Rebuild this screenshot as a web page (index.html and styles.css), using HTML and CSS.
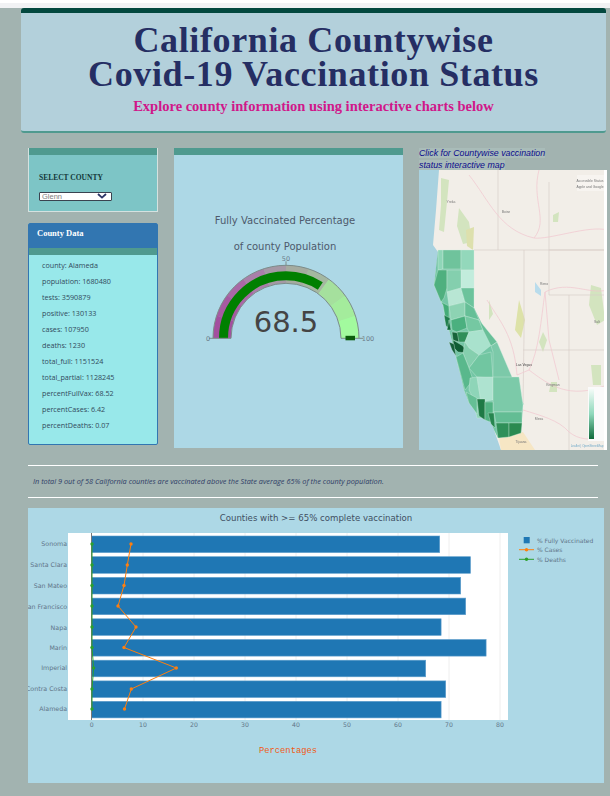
FILE: index.html
```html
<!DOCTYPE html>
<html lang="en">
<head>
<meta charset="utf-8">
<title>California Countywise Covid-19 Vaccination Status</title>
<link rel="stylesheet" href="styles.css">
</head>
<body>
<div class="topbar"></div>
<main class="page">
  <header class="hero">
    <h1>California Countywise<br>Covid-19 Vaccination Status</h1>
    <p class="lead">Explore county information using interactive charts below</p>
  </header>

  <section class="dash">
    <div class="side">
      <div class="card-select">
        <div class="band"></div>
        <div class="select-body">
          <h6>SELECT COUNTY</h6>
          <div class="select-wrap">
            <select><option>Glenn</option></select>
            <svg class="chev" viewBox="0 0 10 6"><path d="M1 1 L5 4.6 L9 1" fill="none" stroke="#2b3566" stroke-width="1.8"/></svg>
          </div>
        </div>
      </div>
      <div class="card-data">
        <div class="data-head">County Data</div>
        <div class="band"></div>
        <ul class="data-list">
          <li>county: Alameda</li>
          <li>population: 1680480</li>
          <li>tests: 3590879</li>
          <li>positive: 130133</li>
          <li>cases: 107950</li>
          <li>deaths: 1230</li>
          <li>total_full: 1151524</li>
          <li>total_partial: 1128245</li>
          <li>percentFullVax: 68.52</li>
          <li>percentCases: 6.42</li>
          <li>percentDeaths: 0.07</li>
        </ul>
      </div>
    </div>

    <div class="gauge-card">
      <div class="band"></div>
      <svg class="gauge" viewBox="174 155 229 293">
        <text class="g-title" x="285" y="224">Fully Vaccinated Percentage</text>
        <text class="g-title" x="285" y="250">of county Population</text>
        <g transform="translate(286 338.3)" fill="none">
          <g stroke-width="18">
            <path stroke="#a34f9f" pathLength="100" stroke-dasharray="10.2 200" stroke-dashoffset="0" d="M-64 0A64 64 0 0 1 64 0"/>
            <path stroke="#a65aa2" pathLength="100" stroke-dasharray="10.2 200" stroke-dashoffset="-10" d="M-64 0A64 64 0 0 1 64 0"/>
            <path stroke="#a968a6" pathLength="100" stroke-dasharray="10.2 200" stroke-dashoffset="-20" d="M-64 0A64 64 0 0 1 64 0"/>
            <path stroke="#a97fa9" pathLength="100" stroke-dasharray="10.2 200" stroke-dashoffset="-30" d="M-64 0A64 64 0 0 1 64 0"/>
            <path stroke="#a598a5" pathLength="100" stroke-dasharray="10.2 200" stroke-dashoffset="-40" d="M-64 0A64 64 0 0 1 64 0"/>
            <path stroke="#a5ab9f" pathLength="100" stroke-dasharray="10.2 200" stroke-dashoffset="-50" d="M-64 0A64 64 0 0 1 64 0"/>
            <path stroke="#a5b8a0" pathLength="100" stroke-dasharray="10.2 200" stroke-dashoffset="-60" d="M-64 0A64 64 0 0 1 64 0"/>
            <path stroke="#a5e09d" pathLength="100" stroke-dasharray="10.2 200" stroke-dashoffset="-70" d="M-64 0A64 64 0 0 1 64 0"/>
            <path stroke="#a4ec9c" pathLength="100" stroke-dasharray="10.2 200" stroke-dashoffset="-80" d="M-64 0A64 64 0 0 1 64 0"/>
            <path stroke="#a2fa9e" pathLength="100" stroke-dasharray="10 200" stroke-dashoffset="-90" d="M-64 0A64 64 0 0 1 64 0"/>
          </g>
          <path stroke="#008000" stroke-width="9" pathLength="100" stroke-dasharray="68.5 200" d="M-62.5 0A62.5 62.5 0 0 1 62.5 0"/>
          <path stroke="#7c8c8a" stroke-width="1" d="M-73 0A73 73 0 0 1 73 0L55 0A55 55 0 0 0 -55 0Z"/>
          <path stroke="#7c8c8a" stroke-width="1" d="M-77 0H-73M0 -77V-73M73 0H77"/>
          <rect x="59.5" y="-2.5" width="9.5" height="4.5" fill="#0b5c0b"/>
        </g>
        <text class="g-tick" x="208" y="341">0</text>
        <text class="g-tick" x="286" y="260.5">50</text>
        <text class="g-tick" x="368" y="341">100</text>
        <text class="g-value" x="286" y="331.7">68.5</text>
      </svg>
    </div>

    <div class="map-col">
      <p class="map-cap"><span>Click for Countywise vaccination</span><br><span>status interactive map</span></p>
      <svg class="map" viewBox="0 0 188 280">
        <rect width="188" height="280" fill="#f2eee8"/>
        <g class="soft">
          <path fill="#a9d2e0" d="M0 0H20L17 40L14 75L19 82L15 115L24 135L30 160L37 187L45 220L50 233L69 245L75 260L82 280H0Z"/>
          <path fill="#f6e6c4" d="M82 280L80 268L104 262L116 280Z"/>
          <g fill="#d3e4bf">
            <path d="M22 8L30 10L28 32L25 62L20 60L22 35Z"/>
            <path d="M40 38L50 52L53 72L44 74L38 56Z"/>
            <path d="M134 45L140 42L139 52L134 52Z"/>
            <path d="M172 115L182 118L186 150L178 155L170 135Z"/>
            <path d="M172 195L182 195L182 215L174 215Z"/>
            <path d="M132 212L138 212L138 222L130 222Z"/>
            <path d="M124 162L128 170L124 182L120 172Z"/>
            <path d="M70 130L74 144L70 150Z"/>
          </g>
          <path fill="#dde0ad" d="M47 60L55 57L54 80L48 76Z"/>
          <path fill="#dde2a8" d="M100 130L106 150L102 168L96 160Z"/>
          <path fill="#b9dcec" d="M116 112L122 120L122 126L116 122Z"/>
          <g fill="none" stroke="#d8cfc8" stroke-width=".7">
            <path d="M79 0V80"/><path d="M55 80H188"/><path d="M130 12V80H188"/>
            <path d="M105 80V165L104 235"/><path d="M130 80V125H188"/><path d="M150 125V280"/><path d="M104 180H188"/>
          </g>
          <g fill="none" stroke="#f1c6cf" stroke-width=".7">
            <path d="M50 5C70 30 80 60 115 68C130 70 170 55 188 60"/>
            <path d="M120 0C112 30 130 50 115 68"/>
            <path d="M126 122C122 150 120 180 110 200L98 205"/>
            <path d="M126 122C150 110 170 125 188 120"/>
            <path d="M110 200C130 215 150 230 188 215"/>
            <path d="M104 240C120 245 140 250 150 262C160 270 170 270 188 268"/>
            <path d="M126 122L130 170L140 210"/>
            <path d="M68 130C80 150 95 165 98 205"/>
          </g>
          <path fill="#74c6a6" d="M19 80H55V138L104 235L102 263L79 268L75 260L69 245L50 233L45 220L37 187L30 160L24 135L15 115Z"/>
          <g stroke="#d6f0e6" stroke-width=".35">
            <path fill="#8fd6b8" d="M19 80H24L24 99L19 100Z"/>
            <path fill="#6fc39c" d="M24 80H42V99H24Z"/>
            <path fill="#93d8bb" d="M42 80H55V100H42Z"/>
            <path fill="#c2ecdc" d="M42 100H55V122L42 118Z"/>
            <path fill="#4fb07f" d="M19 100L28 100V118L25 128L22 132L15 115Z"/>
            <path fill="#84cfae" d="M28 100H42V118L28 122Z"/>
            <path fill="#b8e6d4" d="M28 122L42 118L46 132L30 136Z"/>
            <path fill="#6cc39c" d="M42 118H55V138L46 132Z"/>
            <path fill="#44ac78" d="M22 132L30 136V148L27 152L24 135Z"/>
            <path fill="#8dd3b3" d="M30 136L46 132L46 146L32 150Z"/>
            <path fill="#66bf97" d="M46 132L55 138L60 150L46 146Z"/>
            <path fill="#1f7d4c" d="M25 145L31 148L30 158L27 156Z"/>
            <path fill="#0f6a3a" d="M30 150L32 160L28 160Z"/>
            <path fill="#4bb07f" d="M32 150L46 146L48 158L38 162L33 160Z"/>
            <path fill="#75c8a2" d="M46 146L60 150L64 160L50 162L48 158Z"/>
            <path fill="#17643a" d="M33 162L40 163L40 172L34 170Z"/>
            <path fill="#2f8f59" d="M38 162L50 162L46 172L40 172Z"/>
            <path fill="#0f5c33" d="M34 170L44 176L48 183L39 182L35 178Z"/>
            <path fill="#155e38" d="M30 172L35 174L37 186L33 180Z"/>
            <path fill="#a9e2cd" d="M50 162L64 160L76 172L60 185L50 178L46 172Z"/>
            <path fill="#85cfae" d="M46 172L50 178L60 185L50 198L44 183Z"/>
            <path fill="#68bf98" d="M64 160L60 150L78 172L72 176Z"/>
            <path fill="#59b88c" d="M37 187L44 183L50 198L54 210L46 220Z"/>
            <path fill="#71c6a1" d="M60 185L72 182L74 208L58 207L50 198Z"/>
            <path fill="#7cc9a9" d="M72 176L78 172L105 235L74 207L74 182Z"/>
            <path fill="#8ed5b8" d="M51 208L58 207L62 232L66 248H58L54 228L50 220Z"/>
            <path fill="#aee3d0" d="M58 207L74 207V230L62 232Z"/>
            <path fill="#7ccaa9" d="M74 207L100 207L104 235L103 242H74Z"/>
            <path fill="#65bf95" d="M47 222L58 228L58 244L50 233Z"/>
            <path fill="#1f7a46" d="M58 229L66 229L66 250L60 246Z"/>
            <path fill="#52b383" d="M66 232L74 232V253L66 250Z"/>
            <path fill="#278650" d="M69 243L75 243L76 258L72 254Z"/>
            <path fill="#63bd94" d="M75 242H103L103 253L77 253Z"/>
            <path fill="#2f9059" d="M77 253H90V267L79 268Z"/>
            <path fill="#2a8a50" d="M90 253H103L102 263L90 267Z"/>
          </g>
          <rect x="158" y="5" width="27" height="16" fill="#f7f4f0"/>
          <rect x="169" y="217" width="16" height="54" fill="#fafafa"/>
          <defs>
            <linearGradient id="scale" x1="0" y1="0" x2="0" y2="1">
              <stop offset="0" stop-color="#f4fbf8"/>
              <stop offset=".5" stop-color="#8fd8bb"/>
              <stop offset="1" stop-color="#0f6a3a"/>
            </linearGradient>
          </defs>
          <rect x="170" y="219" width="5" height="50" fill="url(#scale)"/>
        </g>
        <g class="map-labels">
          <text x="171" y="12">Accessible Status</text>
          <text x="171" y="18">Apple and Google</text>
          <text x="32" y="33">Yreka</text>
          <text x="87" y="43">Boise</text>
          <text x="125" y="115">Reno</text>
          <text x="105" y="196" class="strong">Las Vegas</text>
          <text x="134" y="216">Kingman</text>
          <text x="120" y="250">Mesa</text>
          <text x="178" y="153">Salt</text>
          <text x="102" y="273">Tijuana</text>
          <text x="168" y="277" class="attr">Leaflet | OpenStreetMap</text>
        </g>
        <rect x="185" width="3" height="280" fill="#fff"/>
      </svg>
    </div>
  </section>

  <hr class="rule">
  <p class="note">In total 9 out of 58 California counties are vaccinated above the State average 65% of the county population.</p>
  <hr class="rule">

  <section class="chart-card">
    <svg class="chart" viewBox="28 508 576 275">
      <text class="c-title" x="316" y="521">Counties with &gt;= 65% complete vaccination</text>
      <rect x="68" y="533" width="440" height="187" fill="#fff"/>
      <g stroke="#eee" stroke-width="1">
        <path d="M143 533V720M194 533V720M245 533V720M296 533V720M347 533V720M398 533V720M449 533V720M500 533V720"/>
      </g>
      <g fill="#1f77b4" stroke="#5f9fcc" stroke-width=".6">
        <rect x="91.7" y="536" width="348" height="16.6"/>
        <rect x="91.7" y="556.7" width="378.8" height="16.6"/>
        <rect x="91.7" y="577.4" width="369" height="16.6"/>
        <rect x="91.7" y="598.1" width="374" height="16.6"/>
        <rect x="91.7" y="618.8" width="349.4" height="16.6"/>
        <rect x="91.7" y="639.5" width="394.4" height="16.6"/>
        <rect x="91.7" y="660.2" width="334" height="16.6"/>
        <rect x="91.7" y="680.9" width="354" height="16.6"/>
        <rect x="91.7" y="701.3" width="349.4" height="16.6"/>
      </g>
      <path d="M91.5 533V720" stroke="#777" stroke-width="1"/>
      <path d="M92 544L92 565L92 585.5L92 606L92 627L92 647.5L93.6 668L92 689L92 709" fill="none" stroke="#2ca02c" stroke-width="1"/>
      <g fill="#2ca02c">
        <circle cx="92" cy="544" r="1.7"/><circle cx="92" cy="565" r="1.7"/><circle cx="92" cy="585.5" r="1.7"/>
        <circle cx="92" cy="606" r="1.7"/><circle cx="92" cy="627" r="1.7"/><circle cx="92" cy="647.5" r="1.7"/>
        <circle cx="93.6" cy="668" r="1.7"/><circle cx="92" cy="689" r="1.7"/><circle cx="92" cy="709" r="1.7"/>
      </g>
      <path d="M131 544L127.3 565L124 585.5L118 606L136 627L124 647.5L176.3 668L131.3 689L124.5 709" fill="none" stroke="#ff7f0e" stroke-width="1"/>
      <g fill="#ff7f0e">
        <circle cx="131" cy="544" r="1.7"/><circle cx="127.3" cy="565" r="1.7"/><circle cx="124" cy="585.5" r="1.7"/>
        <circle cx="118" cy="606" r="1.7"/><circle cx="136" cy="627" r="1.7"/><circle cx="124" cy="647.5" r="1.7"/>
        <circle cx="176.3" cy="668" r="1.7"/><circle cx="131.3" cy="689" r="1.7"/><circle cx="124.5" cy="709" r="1.7"/>
      </g>
      <g class="c-ylab">
        <text x="67" y="546">Sonoma</text>
        <text x="67" y="567">Santa Clara</text>
        <text x="67" y="588">San Mateo</text>
        <text x="67" y="608.5">San Francisco</text>
        <text x="67" y="629.5">Napa</text>
        <text x="67" y="649.5">Marin</text>
        <text x="67" y="670">Imperial</text>
        <text x="67" y="691">Contra Costa</text>
        <text x="67" y="711">Alameda</text>
      </g>
      <g class="c-xlab">
        <text x="91.7" y="727">0</text><text x="143" y="727">10</text><text x="194" y="727">20</text>
        <text x="245" y="727">30</text><text x="296" y="727">40</text><text x="347" y="727">50</text>
        <text x="398" y="727">60</text><text x="449" y="727">70</text><text x="500" y="727">80</text>
      </g>
      <text class="c-axis" x="288" y="753">Percentages</text>
      <rect x="523.7" y="537" width="6" height="6.3" fill="#1f77b4"/>
      <path d="M519 549.7H534" stroke="#ff7f0e"/><circle cx="526.5" cy="549.7" r="1.7" fill="#ff7f0e"/>
      <path d="M519 559.3H534" stroke="#2ca02c"/><circle cx="526.5" cy="559.3" r="1.7" fill="#2ca02c"/>
      <g class="c-leg">
        <text x="537" y="542.5">% Fully Vaccinated</text>
        <text x="537" y="552">% Cases</text>
        <text x="537" y="561.5">% Deaths</text>
      </g>
    </svg>
  </section>
</main>
</body>
</html>
```
FILE: styles.css
```css
* { box-sizing: border-box; }
html, body { margin: 0; height: 796px; overflow: hidden; }
body { background: #a2b3b0; font-family: "Liberation Sans", sans-serif; }
.topbar { height: 8px; background: #f1f2f4; border-top: 3px solid #fff; }
.page { padding: 0 4px 0 21px; }

.hero { height: 125px; background: #b3d0db; border-top: 5px solid #03483f; border-bottom: 2px solid #4f9a8f; border-radius: 3px; text-align: center; padding-top: 10px; }
.hero h1 { margin: 0; font: 700 36px/34px "Liberation Serif", serif; color: #252e63; letter-spacing: .62px; }
.lead { margin: 6px 0 0; font: 700 14.5px/18px "Liberation Serif", serif; color: #d0178a; }

.dash { display: grid; grid-template-columns: 130px 229px 188px; column-gap: 16px; margin: 15px 0 0 7px; height: 302px; }
.band { height: 7px; background: #4f9a8f; }
.side { display: flex; flex-direction: column; gap: 11px; }

.card-select { height: 64px; background: #7dc5c6; border: 1px solid #d5e2e0; border-top: 0; }
.select-body { padding: 18px 10px 0; }
.select-body h6 { margin: 0 0 9px; font: 700 7.5px/10px "Liberation Serif", serif; color: #14383a; }
.select-wrap { position: relative; width: 73px; height: 9px; }
.select-wrap select { display: block; appearance: none; width: 100%; height: 100%; padding: 0 2px; border: 1px solid #3a4350; border-radius: 1px; background: #fff; color: #808080; font: 7.5px/7px "Liberation Sans", sans-serif; }
.chev { position: absolute; right: 5px; top: 1px; width: 10px; height: 6px; }

.card-data { height: 222px; background: #98e8ea; border: 1px solid #3276b1; border-radius: 2px; }
.data-head { height: 24px; background: #3276b1; color: #fff; padding: 4px 8px; font: 700 8.5px/10px "Liberation Serif", serif; }
.data-list { list-style: none; margin: 0; padding: 2px 0 0 13px; font: 7.2px/16px "Open Sans", sans-serif; color: #324a5c; }

.gauge-card { height: 300px; background: #add8e6; }
.gauge { display: block; width: 229px; height: 293px; }
.g-title { font: 10px "DejaVu Sans", sans-serif; fill: #4d5a6c; text-anchor: middle; }
.g-tick { font: 6.5px "DejaVu Sans", sans-serif; fill: #6b7c8a; text-anchor: middle; }
.g-value { font: 29px "DejaVu Sans", sans-serif; fill: #444; text-anchor: middle; }

.map-col { display: flex; flex-direction: column; }
.map-cap { margin: 0; height: 22px; font: italic 8.8px/11.5px "Liberation Sans", sans-serif; color: #0c0c8c; }
.map-cap span { background: #a9bcb9; }
.map { display: block; width: 188px; height: 280px; }
.soft { filter: blur(.6px); }
.map-labels { font: 3.4px "Liberation Sans", sans-serif; fill: #777; text-anchor: middle; filter: blur(.4px); }
.map-labels .strong { fill: #444; }
.map-labels .attr { fill: #6ea8c8; font-size: 3px; }

.rule { height: 1px; margin: 0 8px 0 7px; border: 0; background: #fff; }
.dash + .rule { margin-top: 15px; }
.note { margin: 0 0 0 12px; height: 31px; font: italic 7.35px/31px "Open Sans", sans-serif; color: #2f3d66; }

.chart-card { width: 576px; height: 275px; margin: 10px 0 0 7px; background: #add8e6; }
.chart { display: block; width: 576px; height: 275px; }
.c-title { font: 8.6px "DejaVu Sans", sans-serif; fill: #3f4f62; text-anchor: middle; }
.c-ylab text { font: 6.3px "DejaVu Sans", sans-serif; fill: #5f7488; text-anchor: end; }
.c-xlab text { font: 6.2px "DejaVu Sans", sans-serif; fill: #5f7488; text-anchor: middle; }
.c-axis { font: 8.8px "Liberation Mono", monospace; fill: #f05a14; text-anchor: middle; }
.c-leg text { font: 6px "DejaVu Sans", sans-serif; fill: #5f7488; }
```
